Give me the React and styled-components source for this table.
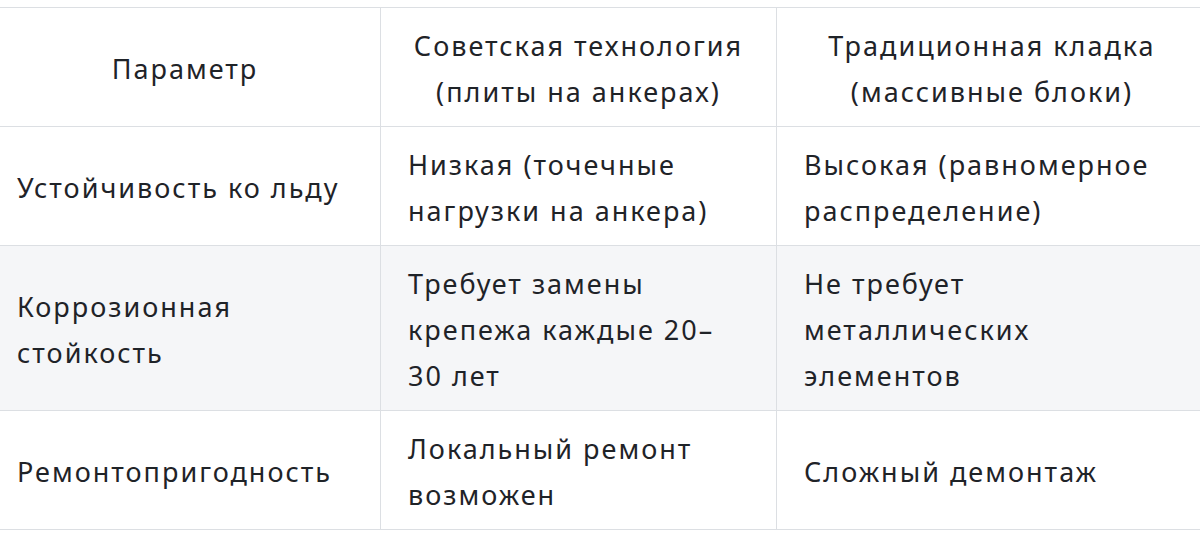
import React from "react";
import styled, { createGlobalStyle } from "styled-components";

const GlobalStyle = createGlobalStyle`
  html, body {
    margin: 0;
    padding: 0;
    background: #ffffff;
  }
  body {
    font-family: "Noto Sans", "Open Sans", sans-serif;
    color: #1f2328;
    overflow: hidden;
  }
`;

const Wrapper = styled.div`
  padding-top: 7px;
  margin-left: -11px;
  width: 1218px;
`;

const Table = styled.table`
  width: 100%;
  border-collapse: collapse;
  table-layout: fixed;
  font-size: 27px;
  letter-spacing: 2px;
  line-height: 46px;
`;

const HeadCell = styled.th`
  font-weight: 400;
  text-align: center;
  vertical-align: middle;
  padding: 15px 27px 11px;
  border: 1px solid #dcdfe3;
`;

const Row = styled.tr`
  background: ${(p) => (p.$shaded ? "#f5f6f8" : "#ffffff")};
`;

const Cell = styled.td`
  text-align: left;
  vertical-align: middle;
  padding: 15px 27px 11px;
  border: 1px solid #dcdfe3;
`;

const columns = [
  { width: 391, title: "Параметр" },
  { width: 396, title: "Советская технология (плиты на анкерах)" },
  { width: 431, title: "Традиционная кладка (массивные блоки)" },
];

const rows = [
  ["Устойчивость ко льду", "Низкая (точечные нагрузки на анкера)", "Высокая (равномерное распределение)"],
  ["Коррозионная стойкость", "Требует замены крепежа каждые 20–30 лет", "Не требует металлических элементов"],
  ["Ремонтопригодность", "Локальный ремонт возможен", "Сложный демонтаж"],
];

export default function App() {
  return (
    <>
      <GlobalStyle />
      <Wrapper>
        <Table>
          <colgroup>
            {columns.map((c) => (
              <col key={c.title} style={{ width: c.width }} />
            ))}
          </colgroup>
          <thead>
            <tr>
              {columns.map((c) => (
                <HeadCell key={c.title}>{c.title}</HeadCell>
              ))}
            </tr>
          </thead>
          <tbody>
            {rows.map((r, i) => (
              <Row key={r[0]} $shaded={i === 1}>
                {r.map((text) => (
                  <Cell key={text}>{text}</Cell>
                ))}
              </Row>
            ))}
          </tbody>
        </Table>
      </Wrapper>
    </>
  );
}
